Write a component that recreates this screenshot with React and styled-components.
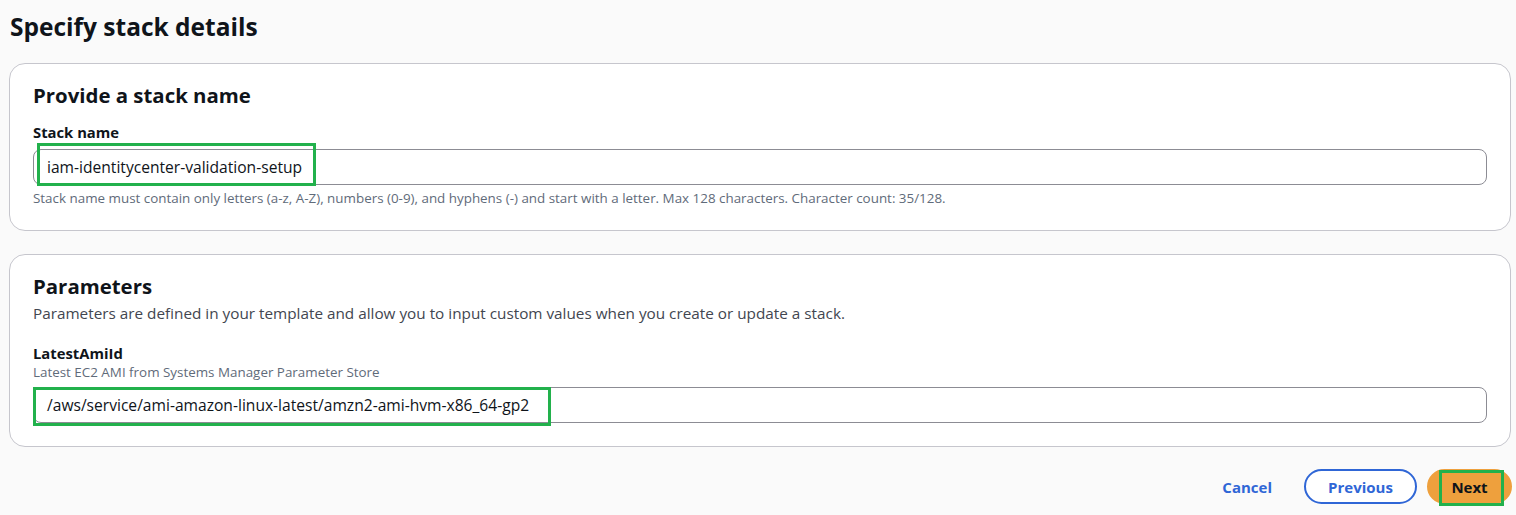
import React from "react";
import styled, { createGlobalStyle } from "styled-components";

const GlobalStyle = createGlobalStyle`
  html, body {
    margin: 0;
    padding: 0;
    background: #fafafa;
  }
  body {
    font-family: "Open Sans", "Noto Sans", "Liberation Sans", sans-serif;
    color: #0f141a;
  }
`;

const Page = styled.div`
  width: 1516px;
  height: 515px;
  box-sizing: border-box;
  padding: 12px 5px 0 9px;
  display: flex;
  flex-direction: column;
`;

const PageTitle = styled.h1`
  margin: 0 0 21px 1px;
  font-size: 24.5px;
  line-height: 30px;
  font-weight: 700;
  color: #0f141a;
`;

const Card = styled.section`
  background: #fff;
  border: 1px solid #c6c6cd;
  border-radius: 16px;
  padding: 19px 23px 23px 23px;
  margin-bottom: ${(p) => p.$gap || 0}px;
  display: flex;
  flex-direction: column;
`;

const CardTitle = styled.h2`
  margin: 0;
  font-size: 20.4px;
  line-height: 24px;
  font-weight: 700;
  color: #0f141a;
`;

const CardDesc = styled.p`
  margin: 4px 0 0;
  font-size: 15.3px;
  line-height: 22px;
  color: #424650;
`;

const Field = styled.div`
  display: flex;
  flex-direction: column;
  margin-top: ${(p) => p.$top || 0}px;
`;

const Label = styled.label`
  font-size: 14.8px;
  line-height: 20px;
  font-weight: 700;
  color: #0f141a;
`;

const Hint = styled.div`
  font-size: 13.4px;
  line-height: 18px;
  color: #5f6b7a;
`;

const InputWrap = styled.div`
  position: relative;
  margin-top: ${(p) => p.$top || 0}px;
  margin-bottom: ${(p) => p.$bottom || 0}px;
`;

const Input = styled.div`
  height: 36px;
  box-sizing: border-box;
  border: 1px solid #8c8c94;
  border-radius: 8px;
  background: #fff;
  padding: 0 13px;
  display: flex;
  align-items: center;
  font-size: 15.6px;
  color: #0f141a;
`;

const Highlight = styled.div`
  position: absolute;
  top: ${(p) => p.$t}px;
  left: ${(p) => p.$l}px;
  width: ${(p) => p.$w}px;
  height: ${(p) => p.$h}px;
  border: 3px solid #22b14c;
  box-sizing: border-box;
  pointer-events: none;
`;

const Actions = styled.div`
  display: flex;
  justify-content: flex-end;
  align-items: center;
  gap: 10px;
  margin-top: 22px;
  margin-right: -1px;
`;

const LinkButton = styled.button`
  background: none;
  border: none;
  font-family: inherit;
  font-size: 15px;
  font-weight: 700;
  color: #2f66d6;
  padding: 0 16px;
  height: 34px;
  margin-right: 6px;
  cursor: pointer;
`;

const Button = styled.button`
  position: relative;
  height: 35px;
  box-sizing: border-box;
  border-radius: 20px;
  font-family: inherit;
  font-size: 15px;
  font-weight: 700;
  cursor: pointer;
  width: ${(p) => p.$w}px;
  border: 2px solid ${(p) => (p.$primary ? "#eea03d" : "#2f66d6")};
  background: ${(p) => (p.$primary ? "#eea03d" : "#fff")};
  color: ${(p) => (p.$primary ? "#0f141a" : "#2f66d6")};
`;

const App = () => {
  return (
    <>
      <GlobalStyle />
      <Page>
        <PageTitle>Specify stack details</PageTitle>
        <Card $gap={23}>
          <CardTitle>Provide a stack name</CardTitle>
          <Field $top={15}>
            <Label>Stack name</Label>
            <InputWrap $top={7} $bottom={4}>
              <Input>iam-identitycenter-validation-setup</Input>
              <Highlight $t={-6} $l={4} $w={279} $h={43} />
            </InputWrap>
            <Hint>
              Stack name must contain only letters (a-z, A-Z), numbers (0-9), and hyphens (-) and
              start with a letter. Max 128 characters. Character count: 35/128.
            </Hint>
          </Field>
        </Card>
        <Card>
          <CardTitle>Parameters</CardTitle>
          <CardDesc>
            Parameters are defined in your template and allow you to input custom values when you
            create or update a stack.
          </CardDesc>
          <Field $top={19}>
            <Label>LatestAmiId</Label>
            <Hint>Latest EC2 AMI from Systems Manager Parameter Store</Hint>
            <InputWrap $top={6}>
              <Input>/aws/service/ami-amazon-linux-latest/amzn2-ami-hvm-x86_64-gp2</Input>
              <Highlight $t={0} $l={0} $w={518} $h={39} />
            </InputWrap>
          </Field>
        </Card>
        <Actions>
          <LinkButton>Cancel</LinkButton>
          <Button $w={113}>Previous</Button>
          <Button $primary $w={85}>
            Next
            <Highlight $t={-1} $l={10} $w={65} $h={36} />
          </Button>
        </Actions>
      </Page>
    </>
  );
};

export default App;
